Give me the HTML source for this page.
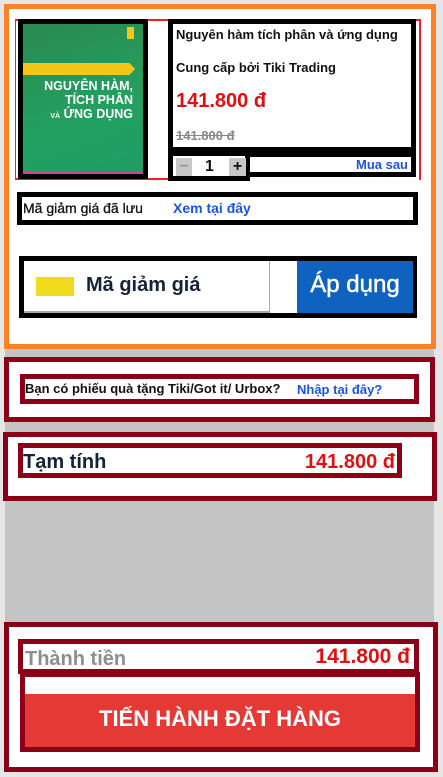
<!DOCTYPE html>
<html><head><meta charset="utf-8"><style>
*{margin:0;padding:0;box-sizing:border-box}
body{width:443px;height:777px;background:#e6e6e6;position:relative;overflow:hidden;font-family:"Liberation Sans",sans-serif;font-weight:bold}
div{position:absolute}
.bk{border:5px solid #000}
.dr{border:5px solid #8b0016}
</style></head><body>
<div style="left:4px;top:4px;width:432px;height:345px;background:#fff;border:5px solid #fd8125"></div>
<div style="left:15px;top:19px;width:406px;height:161px;border:2px solid #ee2020;border-bottom:none;border-left-width:1px"></div>
<div style="left:16px;top:178px;width:153px;height:2px;background:#ee2020"></div>
<div class="bk" style="left:18px;top:19px;width:130px;height:160px;background:linear-gradient(160deg,#2a8a50,#23a060 60%,#1f9c66)">
 <div style="left:0;top:39px;width:112px;height:12px;background:#f5c518;clip-path:polygon(0 0,95% 0,100% 50%,95% 100%,0 100%)"></div>
 <div style="left:104px;top:3px;width:7px;height:12px;background:#f5c518"></div>
 <div style="right:10px;top:55px;color:#fff;font-size:12.5px;line-height:14px;text-align:right;width:110px">NGUYÊN HÀM,<br>TÍCH PHÂN<br><span style="font-size:7px">VÀ</span> ỨNG DỤNG</div>
 <div style="left:0;bottom:0;width:120px;height:2px;background:#d040a0"></div>
</div>
<div class="bk" style="left:168px;top:19px;width:248px;height:133px;font-size:13px;color:#111">
 <div style="left:3px;top:3px;white-space:nowrap">Nguyên hàm tích phân và ứng dụng</div>
 <div style="left:3px;top:36px;white-space:nowrap">Cung cấp bởi Tiki Trading</div>
 <div style="left:3px;top:66px;font-size:20px;color:#e01010">141.800 đ</div>
 <div style="left:3px;top:104px;color:#888;text-decoration:line-through">141.800 đ</div>
</div>
<div class="bk" style="left:168px;top:151px;width:82px;height:30px;background:#fff">
 <div style="left:3px;top:2px;width:16px;height:18px;background:#c8c8c8;color:#999;text-align:center;font-size:16px;line-height:17px">−</div>
 <div style="left:32px;top:0;font-size:16px;line-height:21px;color:#111">1</div>
 <div style="left:56px;top:2px;width:17px;height:18px;background:#c8c8c8;color:#111;text-align:center;font-size:16px;line-height:18px">+</div>
</div>
<div class="bk" style="left:248px;top:152px;width:168px;height:25px;border-left:none"><div style="right:3px;top:0;color:#1a55e0;font-size:13px;line-height:16px">Mua sau</div></div>
<div class="bk" style="left:17px;top:192px;width:401px;height:33px;font-size:14px">
 <div style="left:1px;top:3px;color:#111;font-weight:normal;-webkit-text-stroke:0.3px #111">Mã giảm giá đã lưu</div>
 <div style="left:151px;top:3px;color:#1a55e0">Xem tại đây</div>
</div>
<div class="bk" style="left:19px;top:256px;width:398px;height:62px">
 <div style="left:0;top:0;width:246px;height:52px;background:#fff;border-right:1px solid #aaa;border-bottom:2px solid #aaa">
  <div style="left:12px;top:16px;width:38px;height:19px;background:#f0dc1c"></div>
  <div style="left:62px;top:13px;font-size:20px;color:#152238">Mã giảm giá</div>
 </div>
 <div style="left:273px;top:0;width:116px;height:52px;background:#0f62bf;color:#fff;font-size:24px;text-align:center;line-height:48px;font-weight:normal;-webkit-text-stroke:0.5px #fff">Áp dụng</div>
</div>
<div style="left:5px;top:349px;width:429px;height:274px;background:#c4c4c4"></div>
<div class="dr" style="left:4px;top:357px;width:431px;height:65px;background:#fff"></div>
<div class="dr" style="left:20px;top:374px;width:399px;height:30px;font-size:13px">
 <div style="left:0;top:2px;color:#111;white-space:nowrap">Bạn có phiếu quà tặng Tiki/Got it/ Urbox?</div>
 <div style="left:272px;top:3px;color:#1a55e0">Nhập tại đây?</div>
</div>
<div class="dr" style="left:3px;top:432px;width:434px;height:69px;background:#fff"></div>
<div class="dr" style="left:18px;top:443px;width:384px;height:35px">
 <div style="left:0;top:3px;font-size:20px;color:#152238">Tạm tính</div>
 <div style="right:2px;top:3px;font-size:20px;color:#e01010">141.800 đ</div>
</div>
<div class="dr" style="left:4px;top:622px;width:434px;height:150px;background:#fff"></div>
<div class="dr" style="left:18px;top:639px;width:401px;height:35px">
 <div style="left:2px;top:4px;font-size:20px;color:#8e8e8e">Thành tiền</div>
 <div style="right:4px;top:1px;font-size:21px;color:#e01010">141.800 đ</div>
</div>
<div class="dr" style="left:20px;top:672px;width:400px;height:80px">
 <div style="left:0;top:17px;width:390px;height:53px;background:#e53935;color:#fff;font-size:22px;text-align:center;line-height:50px">TIẾN HÀNH ĐẶT HÀNG</div>
</div>
</body></html>
